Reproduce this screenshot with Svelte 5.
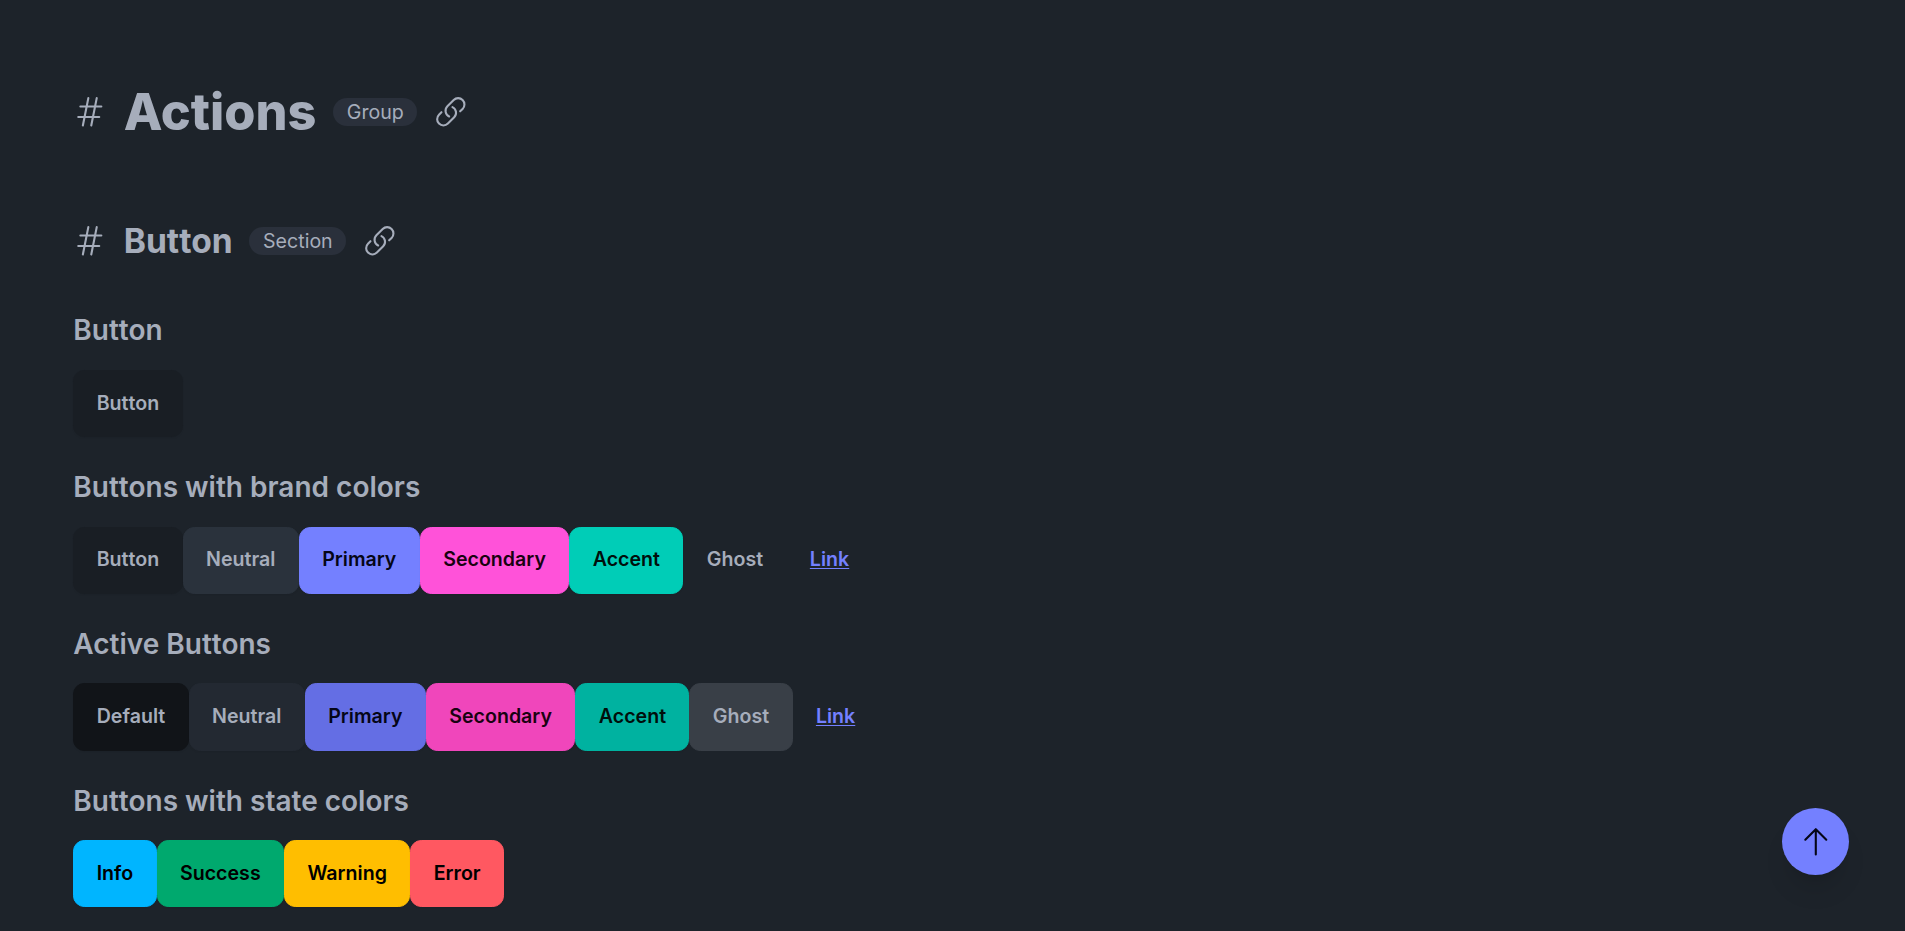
<script>
  const rows = [
    { title: 'Button', buttons: [['Button', 'default']] },
    {
      title: 'Buttons with brand colors',
      buttons: [['Button', 'default'], ['Neutral', 'neutral'], ['Primary', 'primary'], ['Secondary', 'secondary'], ['Accent', 'accent'], ['Ghost', 'ghost'], ['Link', 'link']]
    },
    {
      title: 'Active Buttons',
      active: true,
      buttons: [['Default', 'default'], ['Neutral', 'neutral'], ['Primary', 'primary'], ['Secondary', 'secondary'], ['Accent', 'accent'], ['Ghost', 'ghost'], ['Link', 'link']]
    },
    {
      title: 'Buttons with state colors',
      buttons: [['Info', 'info'], ['Success', 'success'], ['Warning', 'warning'], ['Error', 'error']]
    }
  ];
</script>

{#snippet hash()}
  <svg class="icon" viewBox="0 0 24 24"><path d="M5.25 8.25h15m-16.5 7.5h15m-1.8-13.5-3.9 19.5m-2.1-19.5-3.9 19.5" /></svg>
{/snippet}

{#snippet chain()}
  <svg class="icon" viewBox="0 0 24 24"><path d="M13.19 8.688a4.5 4.5 0 0 1 1.242 7.244l-4.5 4.5a4.5 4.5 0 0 1-6.364-6.364l1.757-1.757m13.35-.622 1.757-1.757a4.5 4.5 0 0 0-6.364-6.364l-4.5 4.5a4.5 4.5 0 0 0 1.242 7.244" /></svg>
{/snippet}

<!-- Opens up the tight pair of t's that Inter kerns together -->
{#snippet spaced(text)}{#each text.split(/(?<=t)(?=t)/) as part, i}<span class:loose={i > 0}>{part}</span>{/each}{/snippet}

<main>
  <header class="group">
    {@render hash()}
    <h1>Actions</h1>
    <span class="badge">Group</span>
    {@render chain()}
  </header>
  <header class="section">
    {@render hash()}
    <h2>{@render spaced('Button')}</h2>
    <span class="badge">Section</span>
    {@render chain()}
  </header>
  {#each rows as row}
    <section>
      <h3>{@render spaced(row.title)}</h3>
      <div class="row">
        {#each row.buttons as [label, kind]}
          <button class="btn {kind}" class:active={row.active}>{@render spaced(label)}</button>
        {/each}
      </div>
    </section>
  {/each}
</main>
<button class="top" aria-label="Top">
  <svg class="icon" viewBox="0 0 24 24"><path d="M4.5 10.5 12 3m0 0 7.5 7.5M12 3v18" /></svg>
</button>

<style>
  :global(html) { font-size: 22.4px; }
  :global(body) {
    margin: 0;
    background: #1d232a;
    color: #a6adbb;
    font-family: Inter, sans-serif;
    line-height: 1.5;
    overflow: hidden;
  }
  main { padding: 67.2px 73.3px 0; }
  h1, h2, h3 { margin: 0; }
  header { display: flex; align-items: center; gap: 16.8px; }
  .group { height: 90px; }
  .section { height: 78px; margin-top: 45px; }
  h1 { font-size: 50.4px; line-height: 1.11; font-weight: 800; }
  h2 { font-size: 33.6px; line-height: 1.33; font-weight: 700; }
  h3 { font-size: 28px; line-height: 39.2px; font-weight: 600; }
  .loose { margin-left: 0.002em; }
  .icon {
    width: 33.6px;
    height: 33.6px;
    fill: none;
    stroke: currentColor;
    stroke-width: 1.5;
    stroke-linecap: round;
    stroke-linejoin: round;
    flex: none;
  }
  .badge {
    display: inline-flex;
    align-items: center;
    box-sizing: border-box;
    height: 28px;
    padding: 0 13.6px;
    border-radius: 14px;
    background: #2a303b;
    font-size: 19.6px;
    line-height: 28px;
  }
  section { margin-bottom: 31.3px; }
  section:first-of-type { margin-top: 31.3px; }
  .row { display: flex; margin-top: 19.1px; }
  .btn {
    box-sizing: border-box;
    height: 67.2px;
    padding: 0 22.4px;
    border: 1px solid var(--c);
    border-radius: 11.2px;
    background: var(--c);
    color: var(--t, #000);
    box-shadow: 0 1px 2px rgb(0 0 0 / 0.05);
    font: 600 19.6px/1 Inter, sans-serif;
  }
  .default { --c: #191e24; --t: #a6adbb; }
  .neutral { --c: #2a323c; --t: #a6adbb; }
  .primary { --c: #7480ff; --t: #050617; }
  .secondary { --c: #ff52d9; --t: #190211; }
  .accent { --c: #00cdb7; --t: #000f0c; }
  .ghost { --c: transparent; --t: #a6adbb; box-shadow: none; }
  .link { --c: transparent; --t: #7480ff; box-shadow: none; text-decoration: underline; text-underline-offset: 2px; }
  .info { --c: #00b5ff; }
  .success { --c: #00a96e; }
  .warning { --c: #ffbe00; }
  .error { --c: #ff5861; }
  .default.active { --c: #111418; }
  .neutral.active { --c: #232932; }
  .primary.active { --c: #646ee4; }
  .secondary.active { --c: #f046bb; }
  .accent.active { --c: #00b2a0; }
  .ghost.active { --c: #393f47; }
  .top {
    position: fixed;
    right: 56px;
    bottom: 56px;
    width: 67.2px;
    height: 67.2px;
    display: grid;
    place-items: center;
    padding: 0;
    border: 0;
    border-radius: 50%;
    background: #7480ff;
    color: #050617;
    box-shadow: 0 20px 25px -5px rgb(0 0 0 / 0.1), 0 8px 10px -6px rgb(0 0 0 / 0.1);
  }
</style>
